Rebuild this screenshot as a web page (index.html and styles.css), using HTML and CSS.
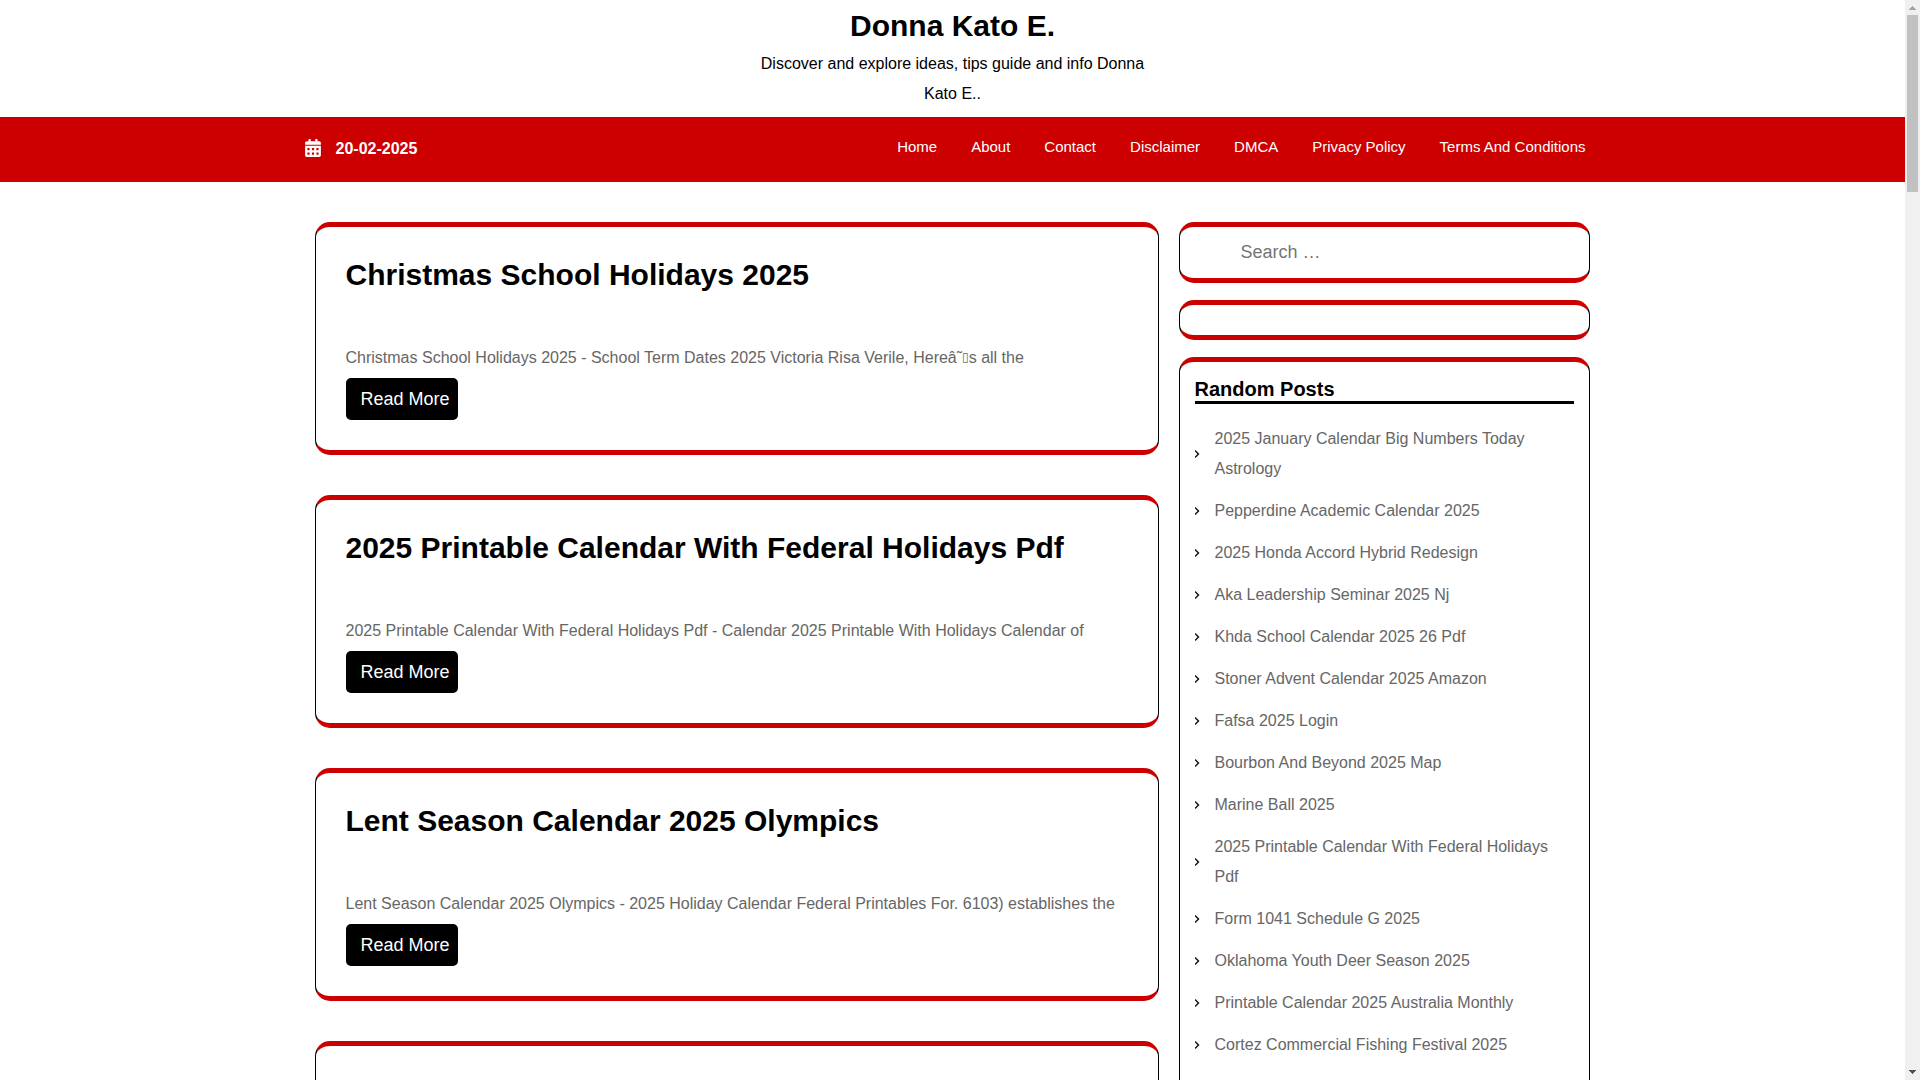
FILE: index.html
```html
<!DOCTYPE html>
<html lang="en">
<head>
<meta charset="utf-8">
<title>Donna Kato E.</title>
<link rel="stylesheet" href="styles.css">
</head>
<body>
<div class="window">
  <div class="page">
    <header class="site-header">
      <h1 class="site-title"><a href="#">Donna Kato E.</a></h1>
      <p class="tagline">Discover and explore ideas, tips guide and info Donna Kato E..</p>
    </header>
    <div class="topbar">
      <div class="topbar-inner">
        <div class="date">
          <svg class="date-icon" viewBox="0 0 448 512" aria-hidden="true"><path fill="currentColor" d="M0 464c0 26.500 21.500 48 48 48h352c26.500 0 48-21.500 48-48V192H0v272zm320-196c0-6.600 5.400-12 12-12h40c6.600 0 12 5.400 12 12v40c0 6.600-5.400 12-12 12h-40c-6.600 0-12-5.400-12-12v-40zm0 128c0-6.600 5.400-12 12-12h40c6.600 0 12 5.400 12 12v40c0 6.600-5.400 12-12 12h-40c-6.600 0-12-5.400-12-12v-40zM192 268c0-6.600 5.400-12 12-12h40c6.600 0 12 5.400 12 12v40c0 6.600-5.400 12-12 12h-40c-6.600 0-12-5.400-12-12v-40zm0 128c0-6.600 5.400-12 12-12h40c6.600 0 12 5.400 12 12v40c0 6.600-5.400 12-12 12h-40c-6.600 0-12-5.400-12-12v-40zM64 268c0-6.600 5.400-12 12-12h40c6.600 0 12 5.400 12 12v40c0 6.600-5.400 12-12 12H76c-6.600 0-12-5.400-12-12v-40zm0 128c0-6.600 5.400-12 12-12h40c6.600 0 12 5.400 12 12v40c0 6.600-5.400 12-12 12H76c-6.600 0-12-5.400-12-12v-40zM400 64h-48V16c0-8.800-7.200-16-16-16h-32c-8.800 0-16 7.200-16 16v48H160V16c0-8.800-7.200-16-16-16h-32c-8.800 0-16 7.200-16 16v48H48C21.500 64 0 85.500 0 112v48h448v-48c0-26.500-21.500-48-48-48z"/></svg>
          <span class="date-text">20-02-2025</span>
        </div>
        <nav class="menu">
          <a href="#">Home</a>
          <a href="#">About</a>
          <a href="#">Contact</a>
          <a href="#">Disclaimer</a>
          <a href="#">DMCA</a>
          <a href="#">Privacy Policy</a>
          <a href="#">Terms And Conditions</a>
        </nav>
      </div>
    </div>
    <div class="content">
      <main class="posts">
        <article class="box post">
          <h2 class="post-title"><a href="#">Christmas School Holidays 2025</a></h2>
          <p class="excerpt">Christmas School Holidays 2025 - School Term Dates 2025 Victoria Risa Verile, Hereâ˜<span class="glyph-box">▯</span>s all the</p>
          <a class="more" href="#">Read More</a>
        </article>
        <article class="box post">
          <h2 class="post-title"><a href="#">2025 Printable Calendar With Federal Holidays Pdf</a></h2>
          <p class="excerpt">2025 Printable Calendar With Federal Holidays Pdf - Calendar 2025 Printable With Holidays Calendar of</p>
          <a class="more" href="#">Read More</a>
        </article>
        <article class="box post">
          <h2 class="post-title"><a href="#">Lent Season Calendar 2025 Olympics</a></h2>
          <p class="excerpt">Lent Season Calendar 2025 Olympics - 2025 Holiday Calendar Federal Printables For. 6103) establishes the</p>
          <a class="more" href="#">Read More</a>
        </article>
        <article class="box post"></article>
      </main>
      <aside class="sidebar">
        <form class="box widget" role="search">
          <input class="search" type="search" placeholder="Search …" aria-label="Search for">
        </form>
        <section class="box widget widget-empty"></section>
        <section class="box widget widget-posts">
          <h3 class="widget-title">Random Posts</h3>
          <ul class="links">
            <li><a href="#">2025 January Calendar Big Numbers Today Astrology</a></li>
            <li><a href="#">Pepperdine Academic Calendar 2025</a></li>
            <li><a href="#">2025 Honda Accord Hybrid Redesign</a></li>
            <li><a href="#">Aka Leadership Seminar 2025 Nj</a></li>
            <li><a href="#">Khda School Calendar 2025 26 Pdf</a></li>
            <li><a href="#">Stoner Advent Calendar 2025 Amazon</a></li>
            <li><a href="#">Fafsa 2025 Login</a></li>
            <li><a href="#">Bourbon And Beyond 2025 Map</a></li>
            <li><a href="#">Marine Ball 2025</a></li>
            <li><a href="#">2025 Printable Calendar With Federal Holidays Pdf</a></li>
            <li><a href="#">Form 1041 Schedule G 2025</a></li>
            <li><a href="#">Oklahoma Youth Deer Season 2025</a></li>
            <li><a href="#">Printable Calendar 2025 Australia Monthly</a></li>
            <li><a href="#">Cortez Commercial Fishing Festival 2025</a></li>
          </ul>
        </section>
      </aside>
    </div>
  </div>
  <div class="scrollbar" aria-hidden="true">
    <svg class="arrow arrow-up" viewBox="0 0 7 4" shape-rendering="crispEdges"><path fill="currentColor" d="M3 0h1v1h1v1h1v1h1v1H0V3h1V2h1V1h1z"/></svg>
    <div class="thumb"></div>
    <svg class="arrow arrow-down" viewBox="0 0 7 4" shape-rendering="crispEdges"><path fill="currentColor" d="M0 0h7v1H6v1H5v1H4v1H3V3H2V2H1V1H0z"/></svg>
  </div>
</div>
</body>
</html>
```
FILE: styles.css
```css
* {
  box-sizing: border-box;
}

body,
h1,
h2,
h3,
p,
ul {
  margin: 0;
  padding: 0;
}

body {
  background: #fff;
  color: #666;
  font: 16px/30px "Liberation Sans", Arial, sans-serif;
}

a {
  color: inherit;
  text-decoration: none;
}

.window {
  display: flex;
  height: 100vh;
  overflow: hidden;
}

.page {
  flex: 1;
  min-width: 0;
}

/* Header */
.site-header {
  padding: 8px 16px;
  text-align: center;
  color: #000;
}

.site-title {
  font-size: 30px;
  line-height: 36px;
}

.tagline {
  max-width: 411px;
  margin: 5px auto 0;
}

.topbar {
  background: #c00;
  color: #fff;
}

.topbar-inner {
  display: flex;
  justify-content: space-between;
  align-items: flex-start;
  max-width: 1296px;
  margin: 0 auto;
  padding: 15px 15px 18px 0;
}

.date {
  display: flex;
  align-items: center;
  gap: 15px;
  font-weight: bold;
}

.date-text {
  padding-top: 2px;
}

.date-icon {
  width: 16px;
  height: 18px;
}

.menu {
  display: flex;
  gap: 34px;
  font-size: 15px;
}

/* Columns */
.content {
  display: flex;
  align-items: flex-start;
  gap: 20px;
  max-width: 1276px;
  margin: 0 auto;
  padding: 40px 1px 0 0;
}

.posts {
  flex: 1;
  min-width: 0;
  display: grid;
  gap: 40px;
}

.sidebar {
  width: 411px;
  display: grid;
  gap: 17px;
}

.box {
  border: 1px solid #000;
  border-width: 5px 1px;
  border-top-color: #c00;
  border-bottom-color: #c00;
  border-radius: 15px;
}

/* Posts */
.post {
  min-height: 233px;
  padding: 30px;
}

.post-title {
  margin-bottom: 50px;
  color: #000;
  font-size: 30px;
  line-height: 36px;
}

.glyph-box {
  font-family: "DejaVu Sans", sans-serif;
  font-size: 12px;
  line-height: 1;
  vertical-align: 2px;
}

.more {
  display: block;
  width: fit-content;
  margin-top: 5px;
  padding: 6px 8px 6px 15px;
  border-radius: 5px;
  background: #000;
  color: #fff;
  font-size: 18px;
}

/* Widgets */
.widget {
  padding: 15px;
}

.widget-empty {
  min-height: 40px;
}

.widget-posts {
  padding-bottom: 60px;
}

.search {
  display: block;
  width: 100%;
  height: 21px;
  padding: 0 0 0 46px;
  border: 0;
  outline: 0;
  appearance: none;
  background: none;
  color: #666;
  font: 18px/21px "Liberation Sans", Arial, sans-serif;
}

.search::placeholder {
  color: #757575;
}

.widget-title {
  border-bottom: 3px solid #000;
  color: #000;
  font-size: 20px;
  line-height: 24px;
}

.links {
  margin-top: 14px;
  list-style: none;
}

.links li {
  display: flex;
  align-items: center;
  gap: 15px;
  padding: 6px 0;
}

.links li::before {
  content: "";
  flex: none;
  width: 5px;
  height: 8px;
  background: #111;
  clip-path: polygon(0 12%, 20% 0, 100% 50%, 20% 100%, 0 88%, 60% 50%);
}

/* Scrollbar */
.scrollbar {
  display: flex;
  flex-direction: column;
  align-items: center;
  width: 15px;
  padding: 6px 0;
  background: #f0f0f0;
}

.arrow {
  width: 7px;
  height: 4px;
}

.arrow-up {
  color: #a3a3a3;
}

.arrow-down {
  margin-top: auto;
  color: #505050;
}

.thumb {
  width: 11px;
  height: 177px;
  margin-top: 5px;
  background: #c1c1c1;
}
```
